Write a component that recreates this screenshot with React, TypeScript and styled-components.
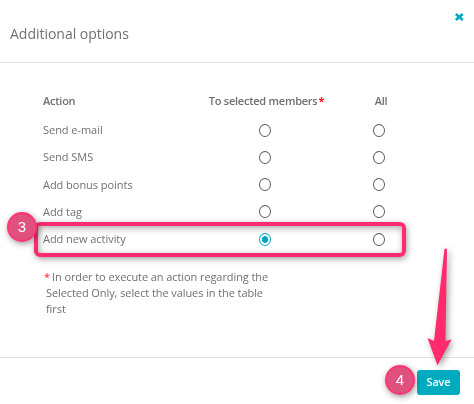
import React from "react";
import styled, { createGlobalStyle } from "styled-components";

const GlobalStyle = createGlobalStyle`
  * { box-sizing: border-box; }
  body { margin: 0; background: #fff; overflow: hidden; }
`;

const Dialog = styled.section`
  position: relative;
  display: flex;
  flex-direction: column;
  width: 474px;
  height: 404px;
  background: #fff;
  color: #707070;
  font-family: "Open Sans", sans-serif;
  font-size: 11px;
`;

const Header = styled.header`
  display: flex;
  justify-content: space-between;
  height: 63px;
  padding: 0 10px;
  border-bottom: 1px solid #e2e2e2;
`;

const Title = styled.h1`
  margin: 24px 0 0;
  font-size: 14px;
  line-height: 20px;
  font-weight: 400;
  letter-spacing: -0.02px;
`;

const CloseButton = styled.button`
  width: 10px;
  height: 10px;
  margin-top: 12px;
  padding: 0;
  border: 0;
  background: none;
  svg { display: block; }
`;

const Body = styled.main`
  flex: 1;
  padding: 24px 0 0 43px;
`;

const Row = styled.div<{ $height?: number }>`
  display: grid;
  grid-template-columns: 152px 140px 88px;
  align-items: center;
  height: ${(p) => p.$height ?? 27}px;
`;

const Heading = styled.span<{ $center?: boolean; $shift?: number }>`
  font-weight: 600;
  line-height: 15px;
  letter-spacing: -0.25px;
  white-space: nowrap;
  text-align: ${(p) => (p.$center ? "center" : "left")};
  padding-left: ${(p) => p.$shift ?? 0}px;
  padding-bottom: 3px;
`;

const Label = styled.span<{ $lift: number }>`
  padding-bottom: ${(p) => p.$lift * 2}px;
  letter-spacing: -0.04px;
  white-space: nowrap;
`;

const Required = styled.span`
  color: #fb1020;
`;

const HeadingMark = styled(Required)`
  margin-left: 1px;
  font-weight: 700;
`;

const Radio = styled.input`
  appearance: none;
  justify-self: center;
  width: 12px;
  height: 13px;
  margin: 0;
  border: 1px solid #5c5c5c;
  border-radius: 50%;
  background: #fff;
  &:checked {
    border-color: #00a9bf;
    background: radial-gradient(circle, #00a9bf 0 3px, #fff 3.6px);
  }
`;

const Note = styled.p`
  width: 235px;
  margin: 16px 0 0 3px;
  line-height: 16px;
  letter-spacing: -0.085px;
  white-space: nowrap;
`;

const NoteMark = styled(Required)`
  margin: 0 2px 0 -2px;
`;

const Footer = styled.footer`
  display: flex;
  justify-content: flex-end;
  height: 47px;
  padding: 12px 14px 0 0;
  border-top: 1px solid #e2e2e2;
`;

const SaveButton = styled.button`
  width: 43px;
  height: 25px;
  padding: 0 0 2px;
  border: 0;
  border-radius: 3px;
  background: #00abc0;
  color: #fff;
  font: 600 11px/23px "Open Sans", sans-serif;
  letter-spacing: -0.2px;
`;

const Highlight = styled.div`
  position: absolute;
  left: 34px;
  top: 222px;
  width: 372px;
  height: 35px;
  border: 4px solid #ff2b6d;
  border-radius: 6px;
  box-shadow: 1px 2px 6px rgba(0, 0, 0, 0.38), inset 1px 2px 7px rgba(0, 0, 0, 0.34);
  mix-blend-mode: multiply;
  pointer-events: none;
`;

const Badge = styled.div<{ $x: number; $y: number }>`
  position: absolute;
  left: ${(p) => p.$x}px;
  top: ${(p) => p.$y}px;
  display: grid;
  place-items: center;
  width: 30px;
  height: 30px;
  border: 2px solid #ff3672;
  border-radius: 50%;
  background: #df517f;
  box-shadow: 1px 2px 6px rgba(0, 0, 0, 0.4);
  color: #fff;
  font: 15px/26px "Liberation Sans", sans-serif;
`;

const Arrow = styled.svg`
  position: absolute;
  left: 414px;
  top: 236px;
  filter: drop-shadow(2px 2px 3px rgba(0, 0, 0, 0.38));
  pointer-events: none;
`;

const actions = [
  { name: "Send e-mail", lift: 1 },
  { name: "Send SMS", lift: 1 },
  { name: "Add bonus points", lift: 0 },
  { name: "Add tag", lift: 0 },
  { name: "Add new activity", lift: 1 },
];

export default function App() {
  return (
    <>
      <GlobalStyle />
      <Dialog>
        <Header>
          <Title>Additional options</Title>
          <CloseButton aria-label="Close">
            <svg width="10" height="10" viewBox="0 0 10 10">
              <path d="M1.8 2L8.8 8M8.8 2L1.8 8" stroke="#00a9bf" strokeWidth="2.5" />
            </svg>
          </CloseButton>
        </Header>
        <Body>
          <Row $height={30}>
            <Heading>Action</Heading>
            <Heading $center $shift={3}>To selected members<HeadingMark>*</HeadingMark></Heading>
            <Heading $center $shift={4}>All</Heading>
          </Row>
          {actions.map(({ name, lift }, i) => (
            <Row key={name} $height={i === 4 ? 28 : 27}>
              <Label $lift={lift}>{name}</Label>
              <Radio type="radio" name="action" aria-label={`${name}, selected members`} defaultChecked={i === 4} />
              <Radio type="radio" name="action" aria-label={`${name}, all`} />
            </Row>
          ))}
          <Note>
            <NoteMark>*</NoteMark>In order to execute an action regarding the<br />
            Selected Only, select the values in the table<br />
            first
          </Note>
        </Body>
        <Footer>
          <SaveButton>Save</SaveButton>
        </Footer>
        <Highlight />
        <Badge $x={7} $y={212}>3</Badge>
        <Badge $x={385} $y={365}>4</Badge>
        <Arrow width="50" height="140" viewBox="414 236 50 140">
          <path d="M444.5 249Q445.5 248 447 249L445.5 341L451.5 339.5L437.5 365.5L427.5 338L434 341Z" fill="#ff2b6d" />
        </Arrow>
      </Dialog>
    </>
  );
}
